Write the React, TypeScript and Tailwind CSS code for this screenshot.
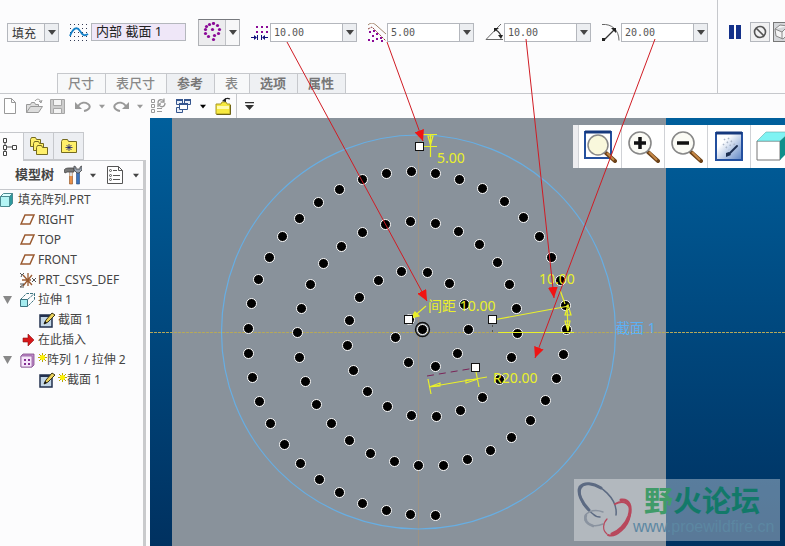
import type { ReactNode } from 'react';
import clsx from 'clsx';

const UI_FONT = "font-['Noto_Sans','Noto_Sans_CJK_SC',sans-serif]";

const ribbonTabs = [
  { label: '尺寸', enabled: false },
  { label: '表尺寸', enabled: false },
  { label: '参考', enabled: true },
  { label: '表', enabled: false },
  { label: '选项', enabled: true },
  { label: '属性', enabled: true },
];

// Pattern members, from the centre out along the spiral
const holes: Array<[number, number]> = [
  [422, 329], [468, 329], [457, 353], [435, 366], [408, 362], [395, 337], [409, 319],
  [464, 304], [449, 283], [427, 272], [401, 271], [378, 280], [359, 297], [349, 320], [347, 345],
  [353, 370], [367, 391], [387, 406], [411, 415], [436, 416], [460, 410], [482, 397], [499, 379],
  [511, 357], [517, 333], [516, 308], [509, 284], [497, 262], [479, 244], [458, 231], [435, 223],
  [410, 221], [385, 224], [362, 232], [341, 246], [323, 263], [310, 284], [301, 308], [297, 332],
  [299, 357], [305, 381], [316, 404], [331, 423], [349, 440], [370, 453], [394, 461], [418, 465],
  [443, 465], [467, 459], [490, 450], [511, 437], [530, 420], [545, 400], [556, 378], [563, 354],
  [566, 329], [565, 305], [560, 280], [551, 257], [539, 236], [523, 217], [504, 201], [482, 188],
  [459, 179], [435, 173], [411, 171], [386, 173], [362, 179], [339, 189], [318, 202], [299, 218],
  [282, 236], [269, 257], [258, 279], [251, 303], [248, 328], [248, 353], [252, 377], [259, 401],
  [270, 423], [284, 444], [300, 463], [319, 479], [339, 492], [362, 503], [386, 510], [410, 514],
  [435, 515],
];

const callouts = [
  { from: [287, 42], to: [427, 301] },
  { from: [387, 42], to: [423, 141] },
  { from: [526, 39], to: [554, 298] },
  { from: [655, 39], to: [535, 358] },
];

function Caret({ className = 'text-[#444]' }: { className?: string }) {
  return (
    <svg width="8" height="5" viewBox="0 0 8 5" className={clsx('shrink-0', className)}>
      <path d="M0 0h8L4 5z" fill="currentColor" />
    </svg>
  );
}

function SketchIcon() {
  return (
    <svg width="20" height="19" viewBox="0 0 20 19" className="shrink-0">
      <g stroke="#333b55" strokeWidth="1" strokeDasharray="1 3">
        <path d="M1 1.5h18M1 5.5h18M1 9.5h18M1 13.5h18M1 17.5h18" />
      </g>
      <path d="M1 13C4 5 8 3 11 8s5 5 8 3" fill="none" stroke="#1581c8" strokeWidth="1.8" />
    </svg>
  );
}

function FillShapeIcon() {
  const dots = [[6, 2], [10, 1], [14, 3], [16, 7], [15, 11], [11, 13], [10, 17], [5, 14], [2, 11], [2, 7], [3, 4], [9, 7]];
  return (
    <svg width="19" height="20" viewBox="0 0 19 20">
      {dots.map(([x, y], i) => (
        <circle key={i} cx={x + 0.5} cy={y + 0.5} r="1.6" fill="#8b0a97" />
      ))}
    </svg>
  );
}

function SpacingIcon() {
  return (
    <svg width="19" height="19" viewBox="0 0 19 19" className="shrink-0">
      <g fill="#8b0a97">
        <path d="M5 3h2v2H5zM10 3h2v2h-2zM15 3h2v2h-2zM5 8h2v2H5zM10 8h2v2h-2zM15 8h2v2h-2z" />
      </g>
      <path d="M0 14.5h5M12 14.5h5M6.5 12v5M10.5 12v5" stroke="#10107c" />
      <path d="M3 12l3 2.5L3 17zM14 12l-3 2.5 3 2.5z" fill="#10107c" />
    </svg>
  );
}

function BoundaryIcon() {
  return (
    <svg width="19" height="19" viewBox="0 0 19 19" className="shrink-0">
      <path d="M0 2C3-1 6 0 9 3l9 8" fill="none" stroke="#a2856b" />
      <path d="M0 6l4-2 14 14" fill="none" stroke="#8b3a38" strokeDasharray="2 1" />
      <g fill="#8b0a97">
        <path d="M1 8h2v2H1zM5 7h2v2H5zM8 10h2v2H8zM4 12h2v2H4zM0 16h2v2H0zM8 15h2v2H8zM12 14h2v2h-2zM13 17h2v2h-2zM4 17h2v2H4z" />
      </g>
    </svg>
  );
}

function AngleIcon() {
  return (
    <svg width="19" height="19" viewBox="0 0 19 19" className="shrink-0" fill="none" stroke="#333">
      <path d="M16 1L1 16.5h17" stroke="#666" />
      <path d="M11 7c3 2 5 4 5 7" strokeWidth="1.3" />
      <path d="M9 9V5h5zM13 12h5l-2 4z" fill="#222" stroke="none" />
    </svg>
  );
}

function RadiusIcon() {
  return (
    <svg width="19" height="19" viewBox="0 0 19 19" className="shrink-0" fill="none" stroke="#333">
      <path d="M0 1.5c10-1 17 6 17 16" stroke="#666" />
      <path d="M2 17L12 7" strokeWidth="1.2" />
      <path d="M9 5h5v5zM0 15h3v3H0z" fill="#222" stroke="none" />
    </svg>
  );
}

function ValueCombo({ label, value, icon }: { label: string; value: string; icon: ReactNode }) {
  return (
    <div className="flex shrink-0 items-center">
      {icon}
      <div className="flex h-[19px] w-[87px] border border-[#b4b7bd] bg-white">
        <input
          aria-label={label}
          defaultValue={value}
          className="w-0 min-w-0 flex-1 bg-transparent pl-[3px] font-['DejaVu_Sans_Mono',monospace] text-[10px] text-[#555] outline-none"
        />
        <button aria-label={`${label}列表`} className="flex w-[14px] items-center justify-center border-l border-[#b4b7bd] bg-[#eceef1]">
          <Caret />
        </button>
      </div>
    </div>
  );
}

function Dashboard() {
  return (
    <header className="flex h-[94px] shrink-0 overflow-hidden border-b border-[#c6c8cc]">
      <div className="flex w-[718px] shrink-0 flex-col justify-between border-r border-[#c6c8cc] pt-[18px]">
        <div className="flex h-7 items-center pl-[7px]">
          <div className="relative h-[19px] w-[52px] border border-[#b4b7bd] bg-[#f7f7f8]">
            <select aria-label="阵列类型" className="block h-full w-full appearance-none bg-transparent pl-1 font-['Noto_Sans_CJK_SC',sans-serif] text-[12px] leading-[17px] text-[#333] outline-none">
              <option>填充</option>
            </select>
            <span className="pointer-events-none absolute inset-y-0 right-0 flex w-[14px] items-center justify-center border-l border-[#b4b7bd] bg-[#eceef1]">
              <Caret />
            </span>
          </div>
          <div className="ml-[10px] flex items-center gap-[2px]">
            <SketchIcon />
            <input
              aria-label="填充草绘"
              defaultValue="内部 截面 1"
              className="h-[18px] w-[95px] border border-[#b4b7bd] bg-[#efe7f8] px-1 text-[13px] text-[#222] outline-none"
            />
          </div>
          <div className="ml-3 flex h-[27px] w-[42px] shrink-0 border border-[#b0b2b6] border-t-[#77797e] bg-[#ececee]">
            <button aria-label="栅格形状" className="flex flex-1 items-center justify-center">
              <FillShapeIcon />
            </button>
            <button aria-label="栅格形状列表" className="flex w-[14px] items-center justify-center border-l border-[#c0c2c6] bg-[#f7f7f8]">
              <Caret />
            </button>
          </div>
          <div className="ml-[11px] flex gap-[11px]">
            <ValueCombo label="间距" value="10.00" icon={<SpacingIcon />} />
            <ValueCombo label="边界距离" value="5.00" icon={<BoundaryIcon />} />
            <ValueCombo label="旋转角度" value="10.00" icon={<AngleIcon />} />
            <ValueCombo label="径向间距" value="20.00" icon={<RadiusIcon />} />
          </div>
        </div>
        <nav className="ml-[57px] flex h-5 self-start border-r border-[#c6c8cc]">
          {ribbonTabs.map((tab) => (
            <button
              key={tab.label}
              className={clsx(
                'border-t border-l border-[#c6c8cc] pr-[11px] pl-[10px] text-[13px] leading-[19px]',
                tab.enabled ? 'bg-[#eef0f3] font-bold text-[#777]' : 'bg-[#f7f8f9] font-medium text-[#888]',
              )}
            >
              {tab.label}
            </button>
          ))}
        </nav>
      </div>
      <div className="mt-[18px] flex h-7 shrink-0 items-center pl-[11px]">
        <button aria-label="暂停">
          <svg width="12" height="14" viewBox="0 0 12 14">
            <path d="M0 0h5v14H0zM7 0h5v14H7z" fill="#14318a" />
          </svg>
        </button>
        <button aria-label="无预览" className="ml-[9px] flex h-5 w-5 items-center justify-center border border-[#b4b7bd] bg-[#f1f1f2]">
          <svg width="14" height="14" viewBox="0 0 14 14" fill="none" stroke="#555" strokeWidth="1.6">
            <circle cx="7" cy="7" r="5.5" />
            <path d="M3 3l8 8" />
          </svg>
        </button>
        <button aria-label="预览" className="ml-[3px] flex h-5 w-5 items-center justify-center border border-[#777] bg-[#d5d7da]">
          <svg width="18" height="16" viewBox="0 0 18 16" fill="#f4f4f4" stroke="#888">
            <path d="M1 5l5-4 8 1v8l-5 5-7-3zM1 5l7 3 6-6M8 8v7" />
          </svg>
        </button>
      </div>
    </header>
  );
}

function FolderGlyph() {
  return (
    <svg width="16" height="18" viewBox="0 0 16 18">
      <path d="M1 7h5l1-2h4l1 2h3v10H1z" fill="#f7e93f" stroke="#a89827" />
      <path d="M2 9h12v3H2z" fill="#fffbb0" />
      <path d="M1.500 17.500h14V8" fill="none" stroke="#6f6417" />
      <path d="M9 3c2-2 4-2 6-1" fill="none" stroke="#222" strokeWidth="1.2" />
      <path d="M11 1L7 4l4 1z" fill="#222" />
    </svg>
  );
}

function QuickAccess() {
  return (
    <div className="flex h-6 shrink-0 items-center pl-1">
      <button aria-label="新建">
        <svg width="12" height="16" viewBox="0 0 12 16" fill="#fff" stroke="#999">
          <path d="M.5.5h7l4 4v11H.5zM7.5.5v4h4" />
        </svg>
      </button>
      <button aria-label="打开" className="ml-[10px]">
        <svg width="17" height="16" viewBox="0 0 17 16" fill="#ddd" stroke="#999">
          <path d="M.5 14.500V6.500h4l1-2h3l1 2h3v2M.5 14.500l4-6h12l-4 6z" />
          <path d="M9 3c2-3 5-2 6 1M13 3l2 2 1-3" fill="none" />
        </svg>
      </button>
      <button aria-label="保存" className="ml-[7px]">
        <svg width="15" height="15" viewBox="0 0 15 15" fill="#ccc" stroke="#a6a6a6">
          <path d="M.5.5h14v14H.5z" />
          <path d="M3.500.5h8v6h-8zM3.500 9.500h8v5h-8z" fill="#f3f3f3" />
        </svg>
      </button>
      <button aria-label="撤消" className="ml-[10px]">
        <svg width="16" height="13" viewBox="0 0 16 13">
          <path d="M3 6c3-4 7-4 10-2s2 6-4 7" fill="none" stroke="#999" strokeWidth="2" />
          <path d="M0 2v7h7z" fill="#999" />
        </svg>
      </button>
      <button aria-label="撤消列表" className="ml-2 flex items-center"><Caret className="w-[6px] text-[#999]" /></button>
      <button aria-label="重做" className="ml-2">
        <svg width="16" height="13" viewBox="0 0 16 13">
          <path d="M13 6C10 2 6 2 3 4s-2 6 4 7" fill="none" stroke="#999" strokeWidth="2" />
          <path d="M16 2v7H9z" fill="#999" />
        </svg>
      </button>
      <button aria-label="重做列表" className="ml-2 flex items-center"><Caret className="w-[6px] text-[#999]" /></button>
      <button aria-label="重新生成" className="ml-2">
        <svg width="16" height="16" viewBox="0 0 16 16" fill="none" stroke="#999">
          <path d="M.5 1.500h3v3h-3zM.5 6.500h3v3h-3zM.5 11.500h3v3h-3zM6 10.500h5M6 13.500h5" />
          <path d="M7 5c0-4 4-4 6-2M14 5c0 4-4 5-6 2M13 .5V4H9.500M7 9V6h3" strokeWidth="1.300" />
        </svg>
      </button>
      <button aria-label="窗口" className="ml-2">
        <svg width="17" height="16" viewBox="0 0 17 16" fill="#e8eef8" stroke="#35558e">
          <path d="M1.500 1.500h6v5h-6zM9.500 1.500h6v5h-6zM1.500 9.500h6v5h-6z" />
          <path d="M1 2h7M9 2h7" strokeWidth="2" />
          <path d="M4.500 5.500h8v6h-8z" fill="#fff" />
          <path d="M4 6h9" strokeWidth="2" />
        </svg>
      </button>
      <button aria-label="窗口列表" className="ml-2 flex items-center"><Caret className="w-[6px]" /></button>
      <button aria-label="关闭窗口" className="ml-[9px]"><FolderGlyph /></button>
      <span className="ml-[5px] h-6 w-px bg-[#c6c8cc]" />
      <button aria-label="自定义工具栏" className="ml-2">
        <svg width="9" height="8" viewBox="0 0 9 8" fill="#333">
          <path d="M0 0h9v1.200H0zM0 3h9L4.500 8z" />
        </svg>
      </button>
    </div>
  );
}

function CubeIcon() {
  return (
    <svg width="14" height="14" viewBox="0 0 14 14" stroke="#4c8b91">
      <path d="M.5 3.500h9v10h-9z" fill="#b4f5f5" />
      <path d="M.5 3.500l3-3h9l-3 3z" fill="#dcffff" />
      <path d="M9.500 3.500l3-3v10l-3 3z" fill="#2e9a9e" />
    </svg>
  );
}

function PlaneIcon() {
  return (
    <svg width="15" height="12" viewBox="0 0 15 12">
      <path d="M5 1h9l-4 9H1z" fill="none" stroke="#9a5a30" strokeWidth="1.500" />
    </svg>
  );
}

function CsysIcon() {
  return (
    <svg width="17" height="16" viewBox="0 0 17 16" fill="none">
      <path d="M8 1v13M2 8h9M3 14L12 3M3 3l9 10" stroke="#9a5a30" strokeWidth="1.300" />
      <path d="M0 1l2 2 2-2M2 3l-1 2M12 6l4 4M16 6l-4 4M0 12h4l-4 3h4" stroke="#555" />
    </svg>
  );
}

function ExtrudeIcon() {
  return (
    <svg width="15" height="14" viewBox="0 0 15 14" stroke="#3c7480">
      <path d="M.5 6.500h7v7h-7z" fill="#a5ecef" />
      <path d="M.5 6.500l6-6h8v6l-7 7M7.500 6.500l7-6" fill="none" strokeDasharray="3 1" />
    </svg>
  );
}

function SectionIcon() {
  return (
    <svg width="17" height="16" viewBox="0 0 17 16">
      <path d="M1 3h12v12H1z" fill="#c3d6e6" stroke="#22304e" strokeWidth="1.500" />
      <path d="M1 3h12v2H1z" fill="#22304e" />
      <path d="M5 12l2-4 6-7 3 2-7 7z" fill="#ecd35c" stroke="#3b3413" />
      <path d="M5 12l1-3 2 2z" fill="#111" />
    </svg>
  );
}

function InsertIcon() {
  return (
    <svg width="12" height="12" viewBox="0 0 12 12">
      <path d="M1 4h5V0l6 6-6 6V8H1z" fill="#d8171a" stroke="#8b1013" strokeWidth=".6" />
    </svg>
  );
}

function PatternIcon() {
  return (
    <svg width="15" height="15" viewBox="0 0 15 15">
      <path d="M1 3l2-2h11v11l-2 2H1z" fill="#c18bcc" stroke="#7d4a87" strokeWidth=".8" />
      <path d="M1 3h11v11H1z" fill="#f6e6fa" stroke="#8f5c99" strokeWidth=".8" />
      <path d="M4 6h2v2H4zM8 6h2v2H8zM4 10h2v2H4zM8 10h2v2H8z" fill="#842e92" />
    </svg>
  );
}

function ChangedMark() {
  return (
    <svg width="9" height="9" viewBox="0 0 9 9" className="mb-[6px] shrink-0">
      <path d="M4.500 0v9M0 4.500h9M1 1l7 7M8 1L1 8" stroke="#b8a800" strokeWidth="1" />
      <circle cx="4.500" cy="4.500" r="2.500" fill="#fff200" />
    </svg>
  );
}

const treeRows: Array<{ label: string; icon: ReactNode; level: number; open?: boolean; changed?: boolean }> = [
  { label: '填充阵列.PRT', icon: <CubeIcon />, level: 0 },
  { label: 'RIGHT', icon: <PlaneIcon />, level: 1 },
  { label: 'TOP', icon: <PlaneIcon />, level: 1 },
  { label: 'FRONT', icon: <PlaneIcon />, level: 1 },
  { label: 'PRT_CSYS_DEF', icon: <CsysIcon />, level: 1 },
  { label: '拉伸 1', icon: <ExtrudeIcon />, level: 1, open: true },
  { label: '截面 1', icon: <SectionIcon />, level: 2 },
  { label: '在此插入', icon: <InsertIcon />, level: 1 },
  { label: '阵列 1 / 拉伸 2', icon: <PatternIcon />, level: 1, open: true, changed: true },
  { label: '截面 1', icon: <SectionIcon />, level: 2, changed: true },
];

function ModelTree() {
  return (
    <aside className="flex w-[150px] shrink-0 flex-col pt-[14px]">
      <div className="flex h-7 w-[84px] border-t border-r border-[#c6c8cc]">
        <button aria-label="模型树" className="flex w-[23px] items-center pl-[2px]">
          <svg width="15" height="20" viewBox="0 0 15 20" fill="#fff" stroke="#444">
            <path d="M3 4v12M5 10h6" />
            <path d="M1.500 1.500h3v4h-3zM1.500 8.500h3v4h-3zM1.500 14.500h3v4h-3zM10.500 8.500h4v4h-4z" />
          </svg>
        </button>
        <button aria-label="文件夹浏览器" className="flex w-[30px] items-center justify-center border-b border-l border-[#c6c8cc] bg-[#eceef2]">
          <svg width="20" height="20" viewBox="0 0 20 20" fill="#fff06a" stroke="#746a20">
            <path d="M1.500 3.500l1-2h4l1 2h4v7h-10z" />
            <path d="M4.500 7.500l1-2h4l1 2h4v7h-10z" />
            <path d="M7.500 11.500l1-2h4l1 2h5v7h-11z" />
          </svg>
        </button>
        <button aria-label="收藏夹" className="flex w-[30px] items-center justify-center border-b border-l border-[#c6c8cc] bg-[#eceef2]">
          <svg width="18" height="16" viewBox="0 0 18 16">
            <path d="M1.500 3.500l1-2h5l1 2h8v11h-15z" fill="#fff06a" stroke="#746a20" />
            <path d="M9 6v7M5.500 9.500h7M6.500 7l5 5M11.500 7l-5 5" stroke="#111a75" strokeWidth=".8" />
          </svg>
        </button>
      </div>
      <div className="mr-1 flex-1 border-r-[3px] border-[#c9cacc]">
        <div className="ml-[23px] h-px bg-[#c6c8cc]" />
        <div className="flex h-[29px] items-center border-b border-[#c6c8cc] pl-[15px]">
          <h2 className="text-[13px] font-bold text-[#444]">模型树</h2>
          <button aria-label="设置" className="ml-[10px] flex items-center gap-2">
            <svg width="18" height="20" viewBox="0 0 18 20">
              <path d="M5.500 6h3v13h-3z" fill="#e8904a" stroke="#8a4d1d" strokeWidth=".6" />
              <path d="M5.500 6h3v5h-3z" fill="#ddd" />
              <path d="M0 6c0-2 2-3 5-3h5v4H3L1 8z" fill="#777" stroke="#444" strokeWidth=".8" />
              <path d="M12.500 6h3v13h-3z" fill="#3d74bb" stroke="#26497a" strokeWidth=".6" />
              <path d="M10 1v4l3 3h2l3-3V1l-2 1v2h-4V2z" fill="#9aa5b3" stroke="#444" strokeWidth=".8" />
            </svg>
            <Caret className="w-[6px] text-[#444]" />
          </button>
          <button aria-label="显示" className="ml-[11px] flex items-center gap-[10px]">
            <svg width="16" height="18" viewBox="0 0 16 18" fill="#fff" stroke="#555">
              <path d="M.5.5h11l4 4v13H.5zM11.500.5v4h4" />
              <path d="M6 4.500h4M6 9.500h7M6 13.500h7" />
              <circle cx="3.500" cy="4.500" r="1" /><circle cx="3.500" cy="9.500" r="1" /><circle cx="3.500" cy="13.500" r="1" />
            </svg>
            <Caret className="w-[6px] text-[#444]" />
          </button>
        </div>
        <ul className="text-[12px] whitespace-nowrap text-[#444]">
          {treeRows.map((row, i) => (
            <li key={i} className="flex h-5 items-center">
              {row.level > 0 && (
                <span className="flex w-5 shrink-0 justify-center pr-[5px]">
                  {row.open && (
                    <button aria-label={`折叠 ${row.label}`}>
                      <svg width="9" height="8" viewBox="0 0 9 8"><path d="M0 0h9L4.500 8z" fill="#888" /></svg>
                    </button>
                  )}
                </span>
              )}
              {row.level > 1 && <span className="w-[19px] shrink-0" />}
              <span className={clsx('flex shrink-0', row.level === 0 ? 'w-[18px]' : row.level === 1 ? 'w-[18px]' : 'w-[19px]', row.label === '在此插入' && 'pl-[2px]')}>{row.icon}</span>
              {row.changed && <ChangedMark />}
              <span>{row.label}</span>
            </li>
          ))}
        </ul>
      </div>
    </aside>
  );
}

function Lens({ children }: { children?: ReactNode }) {
  return (
    <>
      <path d="M21 22l10 9" stroke="#6c4219" strokeWidth="4" strokeLinecap="round" />
      <path d="M22 22l8 8" stroke="#c68845" strokeWidth="2" />
      <circle cx="13" cy="13" r="11" fill="#fbfbf5" stroke="#888" strokeWidth="1.600" />
      {children}
    </>
  );
}

function ViewToolbar() {
  const cell = 'flex h-[43px] w-[43px] items-center justify-center border-l border-[#d0d2d6]';
  return (
    <div className="absolute top-[7px] right-0 flex bg-white">
      <span className="w-[5px] bg-[#ededf0]" />
      <button aria-label="重新调整" className={cell}>
        <svg width="33" height="33" viewBox="0 0 33 33">
          <path d="M1 2h26v26H1z" fill="#fff" stroke="#234f9e" strokeWidth="2" />
          <path d="M1 2h26" stroke="#16397d" strokeWidth="3" />
          <g transform="translate(2 2)">
            <path d="M20 21l9 8" stroke="#6c4219" strokeWidth="4" strokeLinecap="round" />
            <path d="M21 21l7 7" stroke="#c68845" strokeWidth="2" />
            <circle cx="12" cy="13" r="10" fill="#f9f8dc" stroke="#888" strokeWidth="1.500" />
          </g>
        </svg>
      </button>
      <button aria-label="放大" className={cell}>
        <svg width="33" height="33" viewBox="0 0 33 33">
          <Lens><path d="M13 7v12M7 13h12" stroke="#111" strokeWidth="3.500" /></Lens>
        </svg>
      </button>
      <button aria-label="缩小" className={cell}>
        <svg width="33" height="33" viewBox="0 0 33 33">
          <Lens><path d="M7 13h12" stroke="#111" strokeWidth="3.500" /></Lens>
        </svg>
      </button>
      <button aria-label="重画" className={cell}>
        <svg width="28" height="31" viewBox="0 0 28 31">
          <defs>
            <linearGradient id="repaint" x1="0" y1="0" x2="1" y2="1">
              <stop offset=".3" stopColor="#fff" />
              <stop offset="1" stopColor="#5b83c4" />
            </linearGradient>
          </defs>
          <path d="M1 2h26v27H1z" fill="url(#repaint)" stroke="#234f9e" strokeWidth="2" />
          <path d="M1 2h26" stroke="#16397d" strokeWidth="3" />
          <path d="M9 8l8 8M13 7l7 7M8 13l6 6" stroke="#a9b4c6" strokeWidth="1.500" strokeDasharray="1.500 2.500" />
          <path d="M22 15l-8 8" stroke="#1c2e50" strokeWidth="2" strokeLinecap="round" />
          <path d="M11 26v-4l3-1 2 3z" fill="#1c2e50" />
        </svg>
      </button>
      <button aria-label="显示样式" className="flex w-[35px] items-center overflow-hidden border-l border-[#d0d2d6] pl-[5px]">
        <svg width="38" height="31" viewBox="0 0 38 31" className="shrink-0">
          <path d="M1 10h23v19H1z" fill="#fff" stroke="#777" />
          <path d="M1 10l9-9h24L24 10z" fill="#7ff3f3" stroke="#6aa" strokeWidth=".6" />
          <path d="M24 10l10-9v18L24 29z" fill="#0e8f8b" />
        </svg>
      </button>
    </div>
  );
}

function Watermark() {
  return (
    <div className="absolute right-[5px] bottom-[5px] flex h-[62px] w-[206px] bg-white/35">
      <svg width="60" height="58" viewBox="0 0 60 58" className="absolute top-[3px] left-[2px]" fill="none" strokeLinecap="round">
        {/* blue wing */}
        <path d="M40 33C42 17 24 1 11 2C-1 4 3 22 17 32c2 2 4 3 7 3" stroke="#5c6a82" strokeWidth="1.500" />
        <path d="M25 6C17 1 8 0 4 5c-3 6 2 16 9 23" stroke="#5c6a82" strokeWidth="3" />
        {/* grey wing */}
        <path d="M27 30c-10-4-20 1-18 8 2 6 11 7 18 4" stroke="#8a93a0" strokeWidth="1.500" />
        <path d="M10 33c-2 5 1 9 7 11" stroke="#8a93a0" strokeWidth="2.500" />
        {/* red wing */}
        <path d="M39 22c9-5 17 0 15 11-2 12-14 23-22 20" stroke="#b8485c" strokeWidth="2" />
        <path d="M45 18c8-1 11 6 8 16-3 9-11 16-17 18" stroke="#b8485c" strokeWidth="3" />
        <path d="M31 37c-4 4-5 11 0 15" stroke="#b8485c" strokeWidth="1.200" />
      </svg>
      <div className="ml-[59px] flex flex-col whitespace-nowrap">
        <p className="pl-[11px] font-['Noto_Sans_CJK_SC',sans-serif] text-[29px] leading-[40px] font-bold">
          <span className="text-[#419b69]">野</span>
          <span className="text-[#127969]">火论坛</span>
        </p>
        <p className="font-['Liberation_Sans',sans-serif] text-[16px] leading-[16px] text-[#5c87a2]">www.proewildfire.cn</p>
      </div>
    </div>
  );
}

function Handle({ x, y }: { x: number; y: number }) {
  return <rect x={x - 3.5} y={y - 3.5} width="8" height="8" fill="#fff" stroke="#111" />;
}

function SketchView() {
  return (
    <svg width="635" height="428" viewBox="150 118 635 428" className="absolute top-0 left-0">
      <g fill="none">
        <path d="M418.500 135v411" stroke="#9d9384" />
        <path d="M150 332.500h635" stroke="#b5a85a" strokeDasharray="3 1" />
        <circle cx="418.500" cy="332" r="197" stroke="#67aee3" strokeWidth="1.200" />
      </g>

      {holes.map(([x, y], i) => (
        <circle key={i} cx={x + 0.5} cy={y + 0.5} r="5" fill="#000" stroke="#fff" strokeWidth="1" />
      ))}
      <circle cx="422.500" cy="329.500" r="7" fill="none" stroke="#111" strokeWidth="1.300" />

      <g stroke="#eaf02a" fill="none" strokeWidth="1.200">
        <path d="M422 134.500h15M422 146.500h15M430.500 135v22M428 136l2.500 9 2.500-9zM426 306l-14 12" />
        <path d="M411 318l4-6 4 4z" fill="#eaf02a" />
        <path d="M493 320l76-14M498 332.500h76M567 305l1 26M565 315l3-10 3 10zM565 321l3 10 2-10zM560 290l5 14" />
        <path d="M428 379l3 15M476 372l3 15M429 387l58-10M429 387l11-4v3zM478 379l-12 1v3z" />
      </g>
      <path d="M427 376l48-8" stroke="#7a2458" strokeDasharray="7 5" />
      <path d="M492.500 320v13" stroke="#555" strokeDasharray="2 3" />

      <Handle x={419} y={146} />
      <Handle x={408} y={319} />
      <Handle x={492} y={319} />
      <Handle x={475} y={367} />

      <g fill="#eaf02a" className="text-[14px]">
        <text x="437" y="163">5.00</text>
        <text x="428" y="311">间距 10.00</text>
        <text x="539" y="284">10.00</text>
        <text x="493" y="383">R20.00</text>
      </g>
      <text x="616" y="333" fill="#5cb0f5" className="text-[14px]">截面 1</text>
    </svg>
  );
}

function GraphicsWindow() {
  return (
    <main className="relative flex-1 overflow-hidden bg-linear-to-b from-[#005f9c] to-[#003160]">
      <div className="mr-[119px] ml-[22px] h-full bg-[#89929b]" />
      <SketchView />
      <ViewToolbar />
      <Watermark />
    </main>
  );
}

function Callouts() {
  return (
    <svg width="785" height="546" viewBox="0 0 785 546" className="pointer-events-none absolute top-0 left-0">
      <defs>
        <marker id="head" markerWidth="12" markerHeight="10" refX="11" refY="5" orient="auto" markerUnits="userSpaceOnUse">
          <path d="M0 0l11 5-11 5z" fill="#f01414" />
        </marker>
      </defs>
      {callouts.map(({ from, to }, i) => (
        <path key={i} d={`M${from[0]} ${from[1]}L${to[0]} ${to[1]}`} stroke="#d01c24" markerEnd="url(#head)" />
      ))}
    </svg>
  );
}

export default function App() {
  return (
    <div className={clsx('relative flex h-screen flex-col overflow-hidden bg-[#fcfcfd]', UI_FONT)}>
      <Dashboard />
      <QuickAccess />
      <div className="flex min-h-0 flex-1">
        <ModelTree />
        <GraphicsWindow />
      </div>
      <Callouts />
    </div>
  );
}
